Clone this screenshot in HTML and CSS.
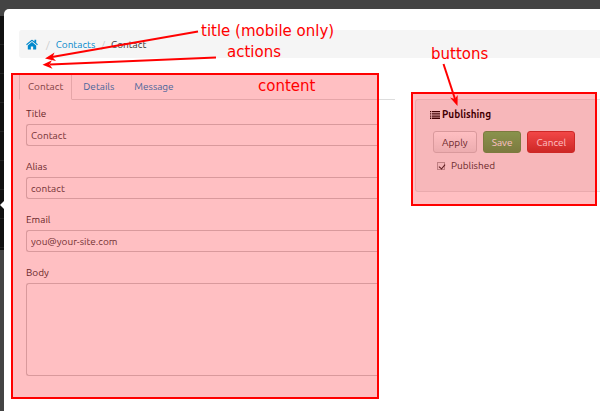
FILE: index.html
```html
<!DOCTYPE html>
<html lang="en">
<head>
<meta charset="utf-8">
<title>Contact</title>
<meta name="viewport" content="width=device-width, initial-scale=1">
<link rel="stylesheet" href="styles.css">
</head>
<body>
<div class="app">
  <div class="sidebar"><div class="sidebar-menu"></div></div>
  <main class="panel">
    <nav class="breadcrumb" aria-label="Breadcrumb">
      <a class="home" href="#" aria-label="Home">
        <svg width="12" height="11" viewBox="0 0 24 22" fill="currentColor"><path d="M12 6.2 3.6 13.1V20q0 1.1 1.1 1.1h5V15h4.600v6.100h5q1.100 0 1.100-1.100v-6.900z"/><path d="M23.700 10.700 20.400 7.900V1.600h-3.500v3.200L13.300 1.800q-1.300-1-2.600 0L.3 10.700l1.100 1.400q.4.300.8 0L12 4l9.800 8.100q.4.300.8 0z"/></svg>
      </a>
      <span class="divider">/</span>
      <a href="#">Contacts</a>
      <span class="divider">/</span>
      <span class="current">Contact</span>
    </nav>
    <div class="columns">
      <section class="content">
        <nav class="tabs">
          <a class="tab active" href="#">Contact</a>
          <a class="tab" href="#">Details</a>
          <a class="tab" href="#">Message</a>
        </nav>
        <form class="fields">
          <div class="field"><label for="title">Title</label><input id="title" type="text" value="Contact"></div>
          <div class="field"><label for="alias">Alias</label><input id="alias" type="text" value="contact"></div>
          <div class="field"><label for="email">Email</label><input id="email" type="text" value="you@your-site.com"></div>
          <div class="field"><label for="body">Body</label><textarea id="body"></textarea></div>
        </form>
      </section>
      <aside class="well">
        <h2 class="well-title">
          <svg width="10" height="8" viewBox="0 0 10 8" fill="currentColor"><path d="M0 0h1.300v1.300H0zM2 0h8v1.300H2zM0 2.200h1.300v1.300H0zM2 2.200h8v1.300H2zM0 4.400h1.300v1.300H0zM2 4.400h8v1.300H2zM0 6.600h1.300v1.300H0zM2 6.600h8v1.300H2z"/></svg>
          Publishing
        </h2>
        <div class="buttons">
          <button class="btn" type="button">Apply</button>
          <button class="btn save" type="button">Save</button>
          <button class="btn cancel" type="button">Cancel</button>
        </div>
        <div class="check"><input id="published" type="checkbox" checked><label for="published">Published</label></div>
      </aside>
    </div>
  </main>
  <svg class="arrows" width="600" height="411" viewBox="0 0 600 411">
    <g stroke="#f00" stroke-width="2" fill="none"><path d="M198 31.500 52 57"/><path d="M216 57.500 50 64.500"/><path d="M443.500 64 455 99"/></g>
    <g fill="#f00"><path d="m45 58.500 9.500-6-2 4.800 3.500 3.700z"/><path d="m42.500 64.800 9.500-4.600-2.500 4.400 3 4.200z"/><path d="m457.500 106-7.500-8.500 4.800 1.400 2.900-3.900z"/></g>
  </svg>
  <span class="note note-title">title (mobile only)</span>
  <span class="note note-actions">actions</span>
  <span class="note note-content">content</span>
  <span class="note note-buttons">buttons</span>
</div>
</body>
</html>
```
FILE: styles.css
```css
* { box-sizing: border-box; }

body {
  margin: 0;
  background: #444;
  color: #333;
  font: 10px/15px Ubuntu, "Noto Sans", sans-serif;
}

a { color: #08c; text-decoration: none; }

.app {
  position: relative;
  display: grid;
  grid-template-columns: 4px minmax(0, 1fr);
  min-height: 100vh;
  overflow: hidden;
}

.sidebar { padding-top: 16px; }

.sidebar-menu {
  height: 234px;
  background: repeating-linear-gradient(#111 0 28px, #222 28px 29px);
}

.panel {
  position: relative;
  margin-top: 9px;
  padding: 21px 0 12px 15px;
  background: #fff;
  border-top-left-radius: 5px;
}

.panel::before {
  content: "";
  position: absolute;
  left: -4px;
  top: 192px;
  border: solid transparent;
  border-width: 4px 4px 4px 0;
  border-right-color: #fff;
}

.breadcrumb {
  display: flex;
  align-items: center;
  gap: 6px;
  height: 28px;
  padding-left: 7px;
  background: #f5f5f5;
  border-radius: 3px 0 0 3px;
}

.home { display: flex; margin-right: 2px; }
.divider { color: #ccc; }

.columns {
  display: grid;
  grid-template-columns: minmax(0, 376fr) minmax(0, 185fr);
  column-gap: 20px;
  align-items: start;
  margin-top: 15px;
}

.content, .well { position: relative; }

.content::after, .well::after {
  content: "";
  position: absolute;
  border: 2px solid #f00;
  background: rgba(255, 0, 10, 0.25);
  pointer-events: none;
}

.content::after { inset: 0 16px 0 -8px; }
.well::after { inset: -8px 3px -15px -5px; }

.tabs {
  display: flex;
  gap: 2px;
  height: 27px;
  border-bottom: 1px solid #ddd;
}

.tab {
  height: 27px;
  padding: 5px 8px;
  border: 1px solid transparent;
}

.tab.active {
  color: #555;
  background: #fff;
  border-color: #ddd #ddd #fff;
}

.fields {
  display: grid;
  gap: 13px;
  padding: 6px 16px 23px 7px;
}

.field { display: grid; gap: 3px; }

.field input, .field textarea {
  width: 100%;
  height: 22px;
  margin: 0;
  padding: 0 4px;
  border: 1px solid #ccc;
  border-right: 0;
  border-radius: 3px 0 0 3px;
  background: #fff;
  color: #444;
  font: inherit;
}

.field textarea { display: block; height: 93px; resize: none; }

.well {
  height: 93px;
  margin-top: 26px;
  padding: 7px 14px;
  border: 1px solid #e3e3e3;
  border-right: 0;
  border-radius: 3px 0 0 3px;
  background: #f5f5f5;
}

.well-title {
  display: flex;
  align-items: center;
  gap: 2px;
  margin: 0;
  color: #000;
  font-size: 10px;
  line-height: 15px;
}

.buttons { display: flex; gap: 6px; margin: 9px 0 0 3px; }

.btn {
  height: 22px;
  padding: 0 8px;
  border: 1px solid #ccc;
  border-radius: 3px;
  background: linear-gradient(#fff, #e6e6e6);
  color: #333;
  font: inherit;
}

.save { color: #fff; border-color: #51a351; background: linear-gradient(#62c462, #51a351); }
.cancel { color: #fff; border-color: #bd362f; background: linear-gradient(#ee5f5b, #bd362f); }

.check { display: flex; align-items: center; gap: 6px; margin: 5px 0 0 7px; }
.check input {
  appearance: none;
  width: 8px;
  height: 8px;
  margin: 0;
  border: 1px solid #aaa;
  background: #eee;
  position: relative;
}
.check input:checked::after {
  content: "";
  position: absolute;
  left: 2px;
  top: 0;
  width: 3px;
  height: 5px;
  border: solid #222;
  border-width: 0 1px 1px 0;
  transform: rotate(40deg);
}

.arrows { position: absolute; left: 0; top: 0; pointer-events: none; }

.note {
  position: absolute;
  color: #f00;
  font: 15px/18px "DejaVu Sans", sans-serif;
  white-space: nowrap;
}

.note-title { left: 201px; top: 22px; }
.note-actions { left: 227px; top: 43px; }
.note-content { left: 258px; top: 77px; }
.note-buttons { left: 431px; top: 45px; }
```
